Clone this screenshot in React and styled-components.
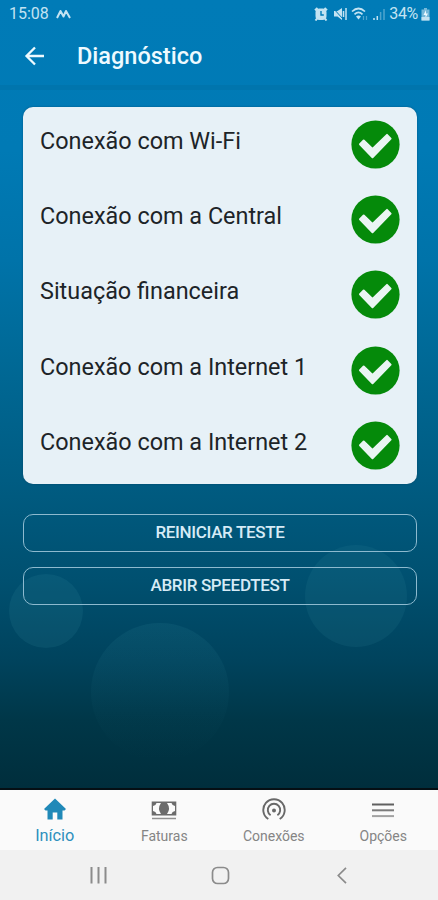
import React from "react";
import styled, { createGlobalStyle } from "styled-components";

const GlobalStyle = createGlobalStyle`
  * { box-sizing: border-box; }
  body { margin: 0; font-family: Roboto, "Liberation Sans", sans-serif; }
`;

const Screen = styled.div`
  width: 438px;
  height: 900px;
  display: flex;
  flex-direction: column;
  overflow: hidden;
  background: #f1f1f1;
`;

const Body = styled.div`
  position: relative;
  height: 790px;
  display: flex;
  flex-direction: column;
  border-bottom: 2px solid #050f14;
  background: linear-gradient(
    180deg,
    #007bb7 0,
    #007ab5 150px,
    #0073a9 260px,
    #006996 360px,
    #005c82 480px,
    #005070 580px,
    #00435d 660px,
    #003748 720px,
    #002e3c 788px
  );
`;

const Bubbles = styled.svg`
  position: absolute;
  inset: 0;
`;

const StatusBar = styled.div`
  height: 28px;
  padding: 0 8px 0 9px;
  display: flex;
  align-items: center;
  justify-content: space-between;
  color: #c3e3f2;
`;

const StatusGroup = styled.div`
  display: flex;
  align-items: center;
  gap: ${(p) => p.$gap}px;
`;

const StatusText = styled.span`
  font-size: 16px;
  line-height: 28px;
  letter-spacing: ${(p) => p.$spacing || 0}px;
`;

const Header = styled.header`
  height: 62px;
  padding: 0 24px 1px;
  display: flex;
  align-items: center;
  gap: 33px;
  border-bottom: 5px solid #0075ad;
`;

const Title = styled.h1`
  margin: 0;
  font-size: 23.5px;
  line-height: 30px;
  font-weight: 500;
  color: #eefaff;
`;

const Content = styled.main`
  position: relative;
  padding: 17px 21px 0 23px;
  display: flex;
  flex-direction: column;
`;

const Card = styled.section`
  height: 377px;
  border-radius: 10px;
  background: #e7f1f7;
  box-shadow: 0 0 2px rgba(0, 50, 80, 0.5);
`;

const Row = styled.div`
  height: 75.4px;
  padding: 0 17px 1px 17px;
  display: flex;
  align-items: center;
  justify-content: space-between;
`;

const RowLabel = styled.span`
  padding-bottom: 7px;
  font-size: 23.42px;
  line-height: 30px;
  color: #1d2428;
`;

const Actions = styled.div`
  margin-top: 30px;
  display: flex;
  flex-direction: column;
  gap: 15px;
`;

const OutlineButton = styled.button`
  height: 38px;
  padding: 0 0 2px;
  border: 1px solid #8dbacf;
  border-radius: 10px;
  background: transparent;
  font: 500 17px/20px Roboto, "Liberation Sans", sans-serif;
  letter-spacing: -0.34px;
  color: #d6ebf6;
`;

const TabBar = styled.nav`
  height: 60px;
  display: grid;
  grid-template-columns: repeat(4, 1fr);
  background: #fafafa;
`;

const Tab = styled.div`
  display: flex;
  flex-direction: column;
  align-items: center;
  padding-top: 7px;
  color: ${(p) => (p.$active ? "#2089b8" : "#686868")};
`;

const TabLabel = styled.span`
  margin-top: 6px;
  font-size: ${(p) => (p.$active ? 16.3 : 14)}px;
  line-height: 18px;
  color: ${(p) => (p.$active ? "#2e90bd" : "#858585")};
`;

const SystemNav = styled.div`
  height: 50px;
  padding: 0 35px 0 37px;
  display: grid;
  grid-template-columns: repeat(3, 1fr);
  place-items: center;
`;

const CheckIcon = () => (
  <svg width="49" height="49" viewBox="0 0 49 49">
    <circle cx="24.5" cy="24.5" r="24.1" fill="#058a0a" />
    <path
      d="M9 24.300 12.700 20.500 21.500 29 36 14.900 39.600 18.600 21.500 37.200Z"
      fill="#eaf5f3"
      stroke="#eaf5f3"
      strokeWidth="2"
      strokeLinejoin="round"
    />
  </svg>
);

const HomeIcon = () => (
  <svg width="24" height="24" viewBox="0 0 24 24" fill="currentColor">
    <path d="M12 1.500 23 12 21.500 13.500H19.500V22.500H14.300V15.500H9.700V22.500H4.500V13.500H2.500L1 12Z" />
  </svg>
);

const CashIcon = () => (
  <svg width="26" height="24" viewBox="0 0 26 24">
    <path d="M.7 4.500h24.600v14H.7z" fill="#6b6b6b" />
    <path d="M5.500 6H10Q6 11.500 10 17H5.500Q5 14.500 2 14V9Q5 8.500 5.500 6ZM20.500 6H16Q20 11.500 16 17H20.500Q21 14.500 24 14V9Q21 8.500 20.500 6Z" fill="#fafafa" />
    <path d="M1 21.500H25" stroke="#909090" strokeWidth="1.500" />
  </svg>
);

const SignalIcon = () => (
  <svg width="24" height="24" viewBox="0 0 24 24" fill="none" stroke="currentColor" strokeWidth="1.900">
    <path d="M6.300 22A10.700 10.700 0 1 1 17.700 22" />
    <path d="M8.600 18.200A6.200 6.200 0 1 1 15.400 18.200" />
    <circle cx="12" cy="13.500" r="2" fill="currentColor" stroke="none" />
  </svg>
);

const MenuIcon = () => (
  <svg width="22" height="24" viewBox="0 0 22 24" strokeWidth="2">
    <path d="M0 7.500H22" stroke="#606060" />
    <path d="M0 13.300H22" stroke="#7b7b7b" />
    <path d="M0 19.100H22" stroke="#a2a2a2" />
  </svg>
);

const rows = [
  "Conexão com Wi-Fi",
  "Conexão com a Central",
  "Situação financeira",
  "Conexão com a Internet 1",
  "Conexão com a Internet 2",
];

const tabs = [
  { label: "Início", Icon: HomeIcon, active: true },
  { label: "Faturas", Icon: CashIcon },
  { label: "Conexões", Icon: SignalIcon },
  { label: "Opções", Icon: MenuIcon },
];

export default function App() {
  return (
    <Screen>
      <GlobalStyle />
      <Body>
        <Bubbles width="438" height="788" viewBox="0 0 438 788">
          <defs>
            <linearGradient id="fade" x1="0" y1="0" x2="0" y2="1">
              <stop offset="0" stopColor="#3d98a8" stopOpacity=".12" />
              <stop offset=".65" stopColor="#3d98a8" stopOpacity=".03" />
              <stop offset="1" stopColor="#3d98a8" stopOpacity="0" />
            </linearGradient>
          </defs>
          <circle cx="46" cy="611" r="37" fill="#3d98a8" opacity=".13" />
          <circle cx="356" cy="596" r="51" fill="#3d98a8" opacity=".12" />
          <circle cx="160" cy="692" r="69" fill="url(#fade)" />
        </Bubbles>
        <StatusBar>
          <StatusGroup $gap={7}>
            <StatusText>15:08</StatusText>
            <svg width="15" height="10" viewBox="0 0 15 10" fill="none" stroke="currentColor" strokeWidth="2" strokeLinejoin="round">
              <path d="M1 9 4.500 2 7.500 7.500 10 2 14 9" />
            </svg>
          </StatusGroup>
          <StatusGroup $gap={4.5}>
            <svg width="14" height="14" viewBox="0 0 14 14">
              <path d="M3.500 1 1 3.200M10.500 1 13 3.200M3 11.500 1.500 13.500M11 11.500 12.500 13.500" stroke="currentColor" strokeWidth="2" />
              <rect x="1.500" y="1.500" width="11" height="11.500" rx="4" fill="currentColor" />
              <path d="M7 4V8H9.800" fill="none" stroke="#007bb7" strokeWidth="1.400" />
            </svg>
            <svg width="14" height="14" viewBox="0 0 14 14">
              <path d="M1 4h3.500L9 1v12L4.500 9.500H1Z" fill="currentColor" />
              <path d="M0 1 10 12" stroke="#007bb7" strokeWidth="1" />
              <path d="M10.500 4v6M13 1v12" stroke="currentColor" strokeWidth="1.500" />
            </svg>
            <svg width="17" height="14" viewBox="0 0 17 14" fill="none" stroke="currentColor">
              <path d="M1 4.500Q7.500-1.500 14 4.500M3.500 7.300Q7.500 3.500 11.500 7.300" strokeWidth="1.700" />
              <path d="M7.500 12.500 5 9.500Q7.500 7.500 10 9.500Z" fill="currentColor" stroke="none" />
              <path d="M12.500 9v4M15.500 9v4" strokeWidth="1.200" opacity=".4" />
            </svg>
            <svg width="12" height="14" viewBox="0 0 12 14" stroke="currentColor" strokeWidth="1.500">
              <path d="M1 11v2M4.300 9v4" />
              <path d="M7.600 5v8M11 2v11" opacity=".4" />
            </svg>
            <StatusGroup $gap={3}>
              <StatusText $spacing={-0.3}>34%</StatusText>
              <svg width="9" height="14" viewBox="0 0 9 14">
                <path d="M3 1h3v1.500H8.500V13.500H.5V2.500H3Z" fill="currentColor" opacity=".6" />
                <path d="M5 3 2.500 8H4.500V11L7 6.500H5Z" fill="#ecfaff" />
                <path d="M.5 10h8v3.500h-8z" fill="currentColor" />
              </svg>
            </StatusGroup>
          </StatusGroup>
        </StatusBar>
        <Header>
          <svg width="20" height="20" viewBox="0 0 20 20" fill="none" stroke="#edfaff" strokeWidth="2.300">
            <path d="M11 1.500 2.500 10 11 18.500M2.500 10H20" />
          </svg>
          <Title>Diagnóstico</Title>
        </Header>
        <Content>
          <Card>
            {rows.map((label) => (
              <Row key={label}>
                <RowLabel>{label}</RowLabel>
                <CheckIcon />
              </Row>
            ))}
          </Card>
          <Actions>
            <OutlineButton>REINICIAR TESTE</OutlineButton>
            <OutlineButton>ABRIR SPEEDTEST</OutlineButton>
          </Actions>
        </Content>
      </Body>
      <TabBar>
        {tabs.map(({ label, Icon, active }) => (
          <Tab key={label} $active={active}>
            <Icon />
            <TabLabel $active={active}>{label}</TabLabel>
          </Tab>
        ))}
      </TabBar>
      <SystemNav>
        <svg width="17" height="17" viewBox="0 0 17 17" stroke="#8b8b8b" strokeWidth="2">
          <path d="M1.500 0V16.500M8.500 0V16.500M15.500 0V16.500" />
        </svg>
        <svg width="19" height="19" viewBox="0 0 19 19" fill="none" stroke="#8b8b8b" strokeWidth="1.700">
          <rect x="1.500" y="1.500" width="16" height="16" rx="5" />
        </svg>
        <svg width="10" height="17" viewBox="0 0 10 17" fill="none" stroke="#8b8b8b" strokeWidth="1.700">
          <path d="M9 .8 1.300 8.500 9 16.200" />
        </svg>
      </SystemNav>
    </Screen>
  );
}
